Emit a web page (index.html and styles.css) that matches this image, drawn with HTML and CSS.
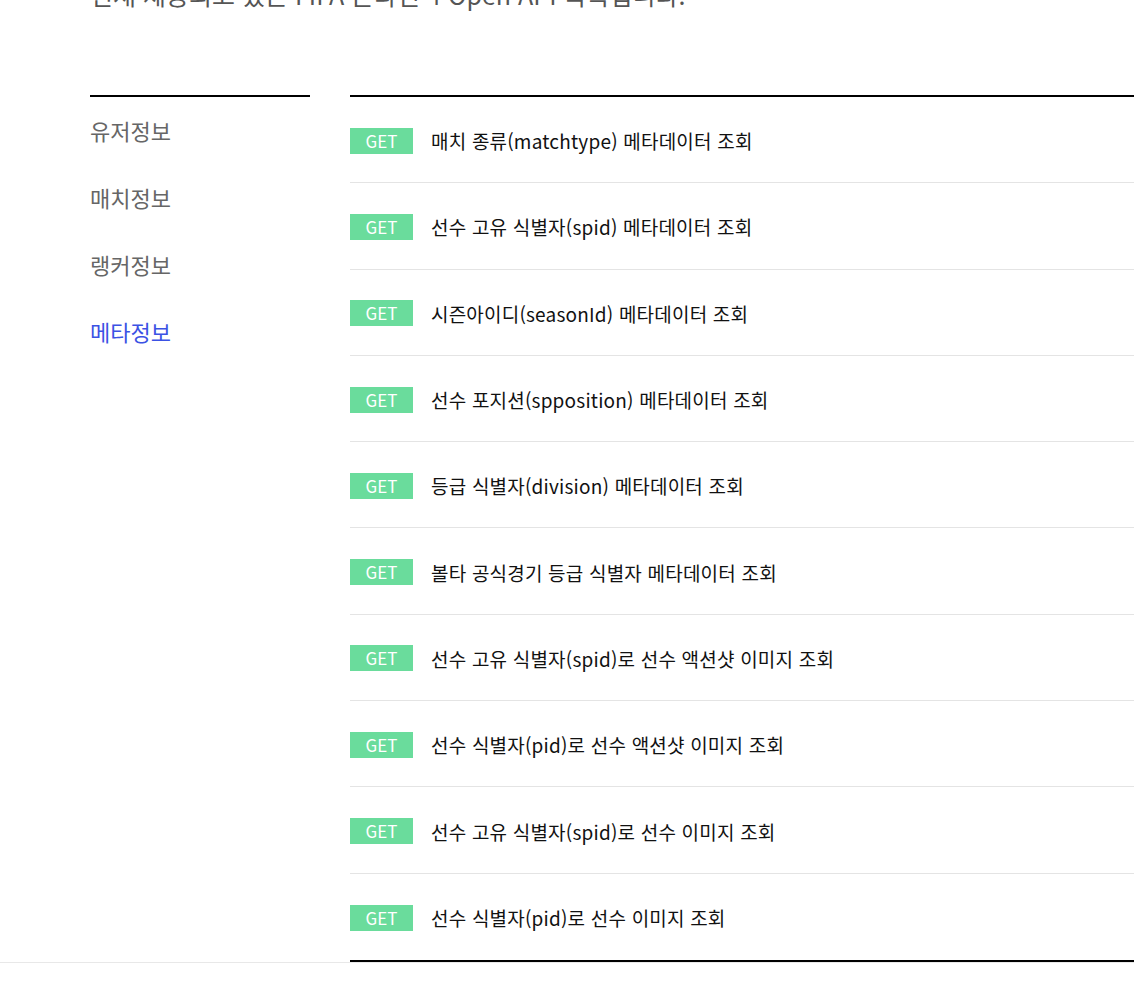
FILE: index.html
```html
<!DOCTYPE html>
<html lang="ko">
<head>
    <meta charset="UTF-8">
    <meta name="viewport" content="width=device-width, initial-scale=1.0">
    <title>API 목록</title>
    <link rel="stylesheet" href="styles.css">
</head>
<body>
    <p class="lead">현재 제공되고 있는 FIFA 온라인 4 Open API 목록입니다.</p>
    <div class="api-wrap">
        <ul class="side-menu">
            <li><a href="#">유저정보</a></li>
            <li><a href="#">매치정보</a></li>
            <li><a href="#">랭커정보</a></li>
            <li class="active"><a href="#">메타정보</a></li>
        </ul>
        <ul class="api-list">
            <li><span class="method">GET</span><a href="#">매치 종류(matchtype) 메타데이터 조회</a></li>
            <li><span class="method">GET</span><a href="#">선수 고유 식별자(spid) 메타데이터 조회</a></li>
            <li><span class="method">GET</span><a href="#">시즌아이디(seasonId) 메타데이터 조회</a></li>
            <li><span class="method">GET</span><a href="#">선수 포지션(spposition) 메타데이터 조회</a></li>
            <li><span class="method">GET</span><a href="#">등급 식별자(division) 메타데이터 조회</a></li>
            <li><span class="method">GET</span><a href="#">볼타 공식경기 등급 식별자 메타데이터 조회</a></li>
            <li><span class="method">GET</span><a href="#">선수 고유 식별자(spid)로 선수 액션샷 이미지 조회</a></li>
            <li><span class="method">GET</span><a href="#">선수 식별자(pid)로 선수 액션샷 이미지 조회</a></li>
            <li><span class="method">GET</span><a href="#">선수 고유 식별자(spid)로 선수 이미지 조회</a></li>
            <li><span class="method">GET</span><a href="#">선수 식별자(pid)로 선수 이미지 조회</a></li>
        </ul>
    </div>
    <footer class="footer"></footer>
</body>
</html>
```

FILE: styles.css
```css
body {
    margin: 0;
    font-family: "Noto Sans CJK KR", "Noto Sans", sans-serif;
    background-color: white;
    overflow: hidden;
}

.lead {
    margin: -24px 0 0 90px;
    font-size: 25px;
    line-height: 36px;
    color: #555;
}

.api-wrap {
    display: flex;
    padding-left: 90px;
    margin-top: 83px;
}

.side-menu {
    list-style-type: none;
    margin: 0;
    padding: 0;
    width: 220px;
    flex-shrink: 0;
    border-top: 2px solid black;
    align-self: flex-start;
}

.side-menu li a {
    display: block;
    height: 67px;
    line-height: 67px;
    font-size: 22px;
    color: #666;
    text-decoration: none;
}

.side-menu li.active a {
    color: #3b52e4;
}

.api-list {
    list-style-type: none;
    margin: 0 0 0 40px;
    padding: 0;
    flex: 1;
    border-top: 2px solid black;
    border-bottom: 2px solid black;
}

.api-list li {
    display: flex;
    align-items: center;
    gap: 18px;
    padding-top: 2px;
    box-sizing: border-box;
    height: 86.3px;
    border-bottom: 1px solid #e4e4e4;
}

.api-list li:last-child {
    border-bottom: none;
}

.api-list .method {
    width: 63px;
    height: 26px;
    line-height: 26px;
    text-align: center;
    background-color: #6adc9c;
    color: white;
    font-size: 17px;
    flex-shrink: 0;
}

.api-list li a {
    font-size: 19px;
    color: #111;
    text-decoration: none;
    letter-spacing: 0.2px;
}

.footer {
    border-top: 1px solid #e8e8e8;
    height: 40px;
}
```
